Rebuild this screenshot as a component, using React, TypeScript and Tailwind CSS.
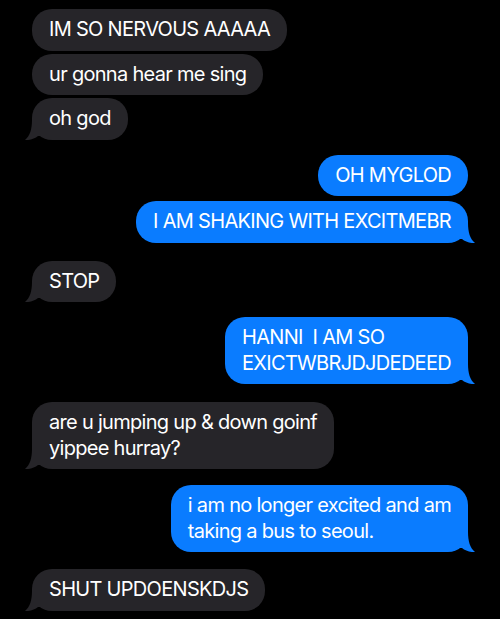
import React from "react";

type Msg = { text: string[]; me: boolean; tail: boolean; mt: number };

const msgs: Msg[] = [
  { text: ["IM SO NERVOUS AAAAA"], me: false, tail: false, mt: 9 },
  { text: ["ur gonna hear me sing"], me: false, tail: false, mt: 3 },
  { text: ["oh god"], me: false, tail: true, mt: 3 },
  { text: ["OH MYGLOD"], me: true, tail: false, mt: 15 },
  { text: ["I AM SHAKING WITH EXCITMEBR"], me: true, tail: true, mt: 5 },
  { text: ["STOP"], me: false, tail: true, mt: 18 },
  { text: ["HANNI  I AM SO", "EXICTWBRJDJDEDEED"], me: true, tail: true, mt: 15 },
  { text: ["are u jumping up & down goinf", "yippee hurray?"], me: false, tail: true, mt: 18 },
  { text: ["i am no longer excited and am", "taking a bus to seoul."], me: true, tail: true, mt: 16 },
  { text: ["SHUT UPDOENSKDJS"], me: false, tail: true, mt: 17 },
];

function Tail({ me }: { me: boolean }) {
  const color = me ? "#0a7cff" : "#262529";
  return (
    <svg
      width="22"
      height="20"
      viewBox="0 0 22 20"
      className={me ? "absolute -right-[7px] bottom-0" : "absolute -left-[7px] bottom-0"}
      style={me ? { transform: "scaleX(-1)" } : undefined}
    >
      <path d="M7 0 C7 9 5 16 0 20 C5 20.5 10 18.5 13 16 L22 16 L22 0 Z" fill={color} />
    </svg>
  );
}

export default function App() {
  return (
    <div
      className="w-[500px] h-[619px] bg-black overflow-hidden flex flex-col px-8"
      style={{ fontFamily: "Inter, 'Noto Sans', sans-serif" }}
    >
      {msgs.map((m, i) => (
        <div
          key={i}
          className={m.me ? "flex justify-end" : "flex justify-start"}
          style={{ marginTop: m.mt }}
        >
          <div
            className={
              "relative rounded-[20px] px-[17px] py-[8px] text-[20px] leading-[25.5px] tracking-[-0.7px] text-white " +
              (m.me ? "bg-[#0a7cff]" : "bg-[#262529]")
            }
          >
            {m.tail && <Tail me={m.me} />}
            <div className="relative">
              {m.text.map((t, j) => (
                <div key={j} className="whitespace-pre">
                  {t}
                </div>
              ))}
            </div>
          </div>
        </div>
      ))}
    </div>
  );
}
